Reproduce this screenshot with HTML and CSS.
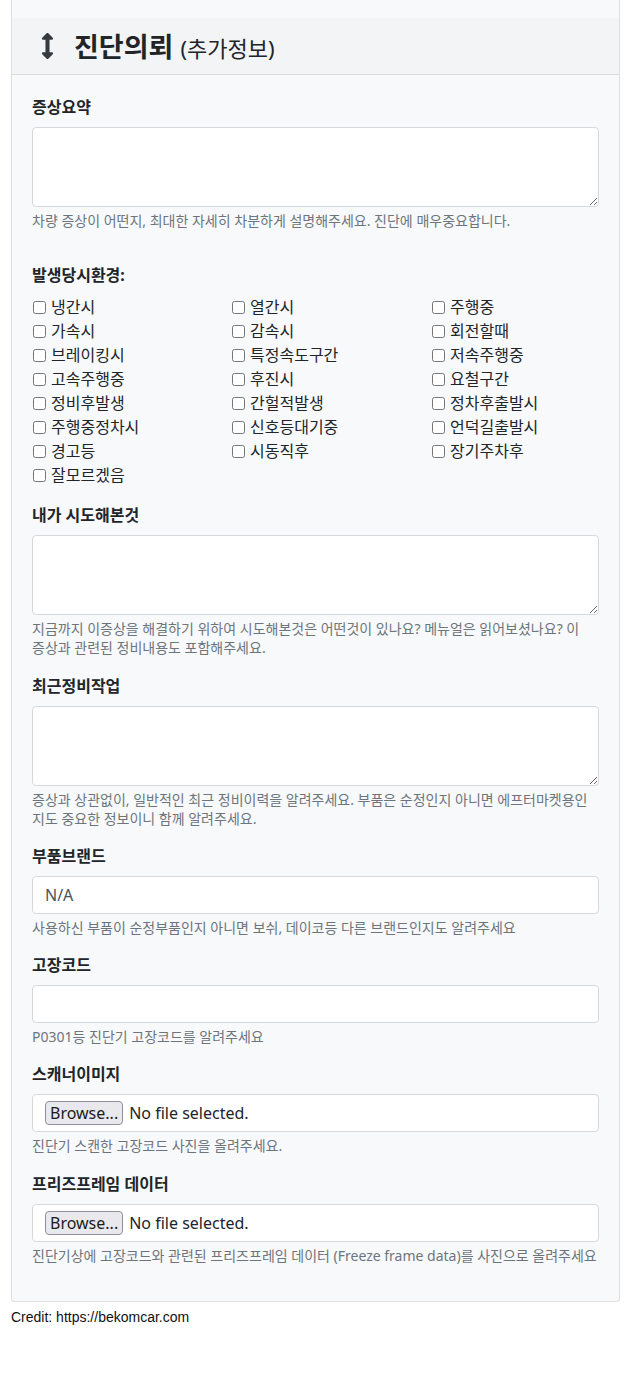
FILE: index.html
```
<!DOCTYPE html>
<html lang="ko">
<head>
<meta charset="UTF-8">
<meta name="viewport" content="width=device-width, initial-scale=1.0">
<title>진단의뢰</title>
<link rel="stylesheet" href="styles.css">
</head>
<body>
<div class="card">
    <div class="card-header">
        <h4 class="title">
            <svg class="icon" viewBox="0 0 256 512" aria-hidden="true"><path d="M214 378H168V134h46c21 0 32-26 17-41L145 7c-9-9-25-9-34 0L25 93c-15 15-4 41 17 41H88v244H42c-21 0-32 26-17 41l86 86c9 9 25 9 34 0l86-86c15-15 4-41-17-41z"/></svg>
            진단의뢰 <small>(추가정보)</small>
        </h4>
    </div>
    <div class="card-body">
        <div class="form-group">
            <label class="form-label">증상요약</label>
            <textarea class="form-control area"></textarea>
            <div class="help">차량 증상이 어떤지, 최대한 자세히 차분하게 설명해주세요. 진단에 매우중요합니다.</div>
        </div>

        <div class="form-group env">
            <label class="form-label">발생당시환경:</label>
            <div class="checks">
                <label class="check"><input type="checkbox"> 냉간시</label>
                <label class="check"><input type="checkbox"> 열간시</label>
                <label class="check"><input type="checkbox"> 주행중</label>
                <label class="check"><input type="checkbox"> 가속시</label>
                <label class="check"><input type="checkbox"> 감속시</label>
                <label class="check"><input type="checkbox"> 회전할때</label>
                <label class="check"><input type="checkbox"> 브레이킹시</label>
                <label class="check"><input type="checkbox"> 특정속도구간</label>
                <label class="check"><input type="checkbox"> 저속주행중</label>
                <label class="check"><input type="checkbox"> 고속주행중</label>
                <label class="check"><input type="checkbox"> 후진시</label>
                <label class="check"><input type="checkbox"> 요철구간</label>
                <label class="check"><input type="checkbox"> 정비후발생</label>
                <label class="check"><input type="checkbox"> 간헐적발생</label>
                <label class="check"><input type="checkbox"> 정차후출발시</label>
                <label class="check"><input type="checkbox"> 주행중정차시</label>
                <label class="check"><input type="checkbox"> 신호등대기중</label>
                <label class="check"><input type="checkbox"> 언덕길출발시</label>
                <label class="check"><input type="checkbox"> 경고등</label>
                <label class="check"><input type="checkbox"> 시동직후</label>
                <label class="check"><input type="checkbox"> 장기주차후</label>
                <label class="check"><input type="checkbox"> 잘모르겠음</label>
            </div>
        </div>

        <div class="form-group">
            <label class="form-label">내가 시도해본것</label>
            <textarea class="form-control area"></textarea>
            <div class="help keep">지금까지 이증상을 해결하기 위하여 시도해본것은 어떤것이 있나요? 메뉴얼은 읽어보셨나요? 이 증상과 관련된 정비내용도 포함해주세요.</div>
        </div>

        <div class="form-group">
            <label class="form-label">최근정비작업</label>
            <textarea class="form-control area"></textarea>
            <div class="help">증상과 상관없이, 일반적인 최근 정비이력을 알려주세요. 부품은 순정인지 아니면 에프터마켓용인지도 중요한 정보이니 함께 알려주세요.</div>
        </div>

        <div class="form-group">
            <label class="form-label">부품브랜드</label>
            <input type="text" class="form-control" value="N/A">
            <div class="help">사용하신 부품이 순정부품인지 아니면 보쉬, 데이코등 다른 브랜드인지도 알려주세요</div>
        </div>

        <div class="form-group">
            <label class="form-label">고장코드</label>
            <input type="text" class="form-control">
            <div class="help">P0301등 진단기 고장코드를 알려주세요</div>
        </div>

        <div class="form-group">
            <label class="form-label">스캐너이미지</label>
            <div class="form-control file">
                <button type="button" class="browse">Browse...</button>
                <span>No file selected.</span>
            </div>
            <div class="help">진단기 스캔한 고장코드 사진을 올려주세요.</div>
        </div>

        <div class="form-group">
            <label class="form-label">프리즈프레임 데이터</label>
            <div class="form-control file">
                <button type="button" class="browse">Browse...</button>
                <span>No file selected.</span>
            </div>
            <div class="help">진단기상에 고장코드와 관련된 프리즈프레임 데이터 (Freeze frame data)를 사진으로 올려주세요</div>
        </div>
    </div>
</div>
<footer>Credit: https://bekomcar.com</footer>
</body>
</html>
```

FILE: styles.css
```
body {
    margin: 0;
    padding: 0 11px;
    font-family: "Noto Sans", "Noto Sans CJK KR", sans-serif;
    color: #212529;
    background: #fff;
}
.card {
    background-color: #f8f9fa;
    border: 1px solid #dfdfdf;
    border-top: none;
    padding-top: 18px;
    border-radius: 0 0 4px 4px;
}
.card-header {
    background-color: #f3f4f5;
    border-bottom: 1px solid #dcdcdc;
    height: 57px;
    box-sizing: border-box;
    padding: 0 20px 0 29px;
    display: flex;
    align-items: center;
}
.title {
    margin: 0;
    display: flex;
    align-items: center;
    font-size: 27px;
    line-height: 1;
    font-weight: 700;
    color: #212529;
}
.title small {
    font-size: 22px;
    line-height: 1;
    font-weight: 400;
    margin-left: 7px;
    margin-top: 3px;
}
.icon {
    width: 13px;
    height: 26px;
    fill: #343a40;
    margin-right: 20px;
}
.card-body {
    padding: 20px;
}
.form-group {
    margin-bottom: 16px;
}
.form-label {
    display: block;
    font-size: 16px;
    line-height: 24px;
    font-weight: 700;
    margin-bottom: 8px;
}
.form-control {
    display: block;
    box-sizing: border-box;
    width: 100%;
    height: 38px;
    padding: 6px 12px;
    font-family: "Noto Sans", "Noto Sans CJK KR", sans-serif;
    font-size: 16px;
    line-height: 24px;
    color: #495057;
    background-color: #fff;
    border: 1px solid #d6d9dc;
    border-radius: 4px;
    margin: 0;
}
.area {
    height: 80px;
    resize: vertical;
}
.help {
    margin-top: 4px;
    font-size: 14px;
    line-height: 19.2px;
    color: #6c757d;
}
.help.keep {
    word-break: keep-all;
}
.env {
    margin-top: 33px;
}
.checks {
    display: grid;
    grid-template-columns: 199px 200px 1fr;
}
.check {
    display: flex;
    align-items: center;
    font-size: 16px;
    line-height: 24px;
    height: 24px;
    color: #212529;
}
.check input {
    width: 13px;
    height: 13px;
    margin: 0 5px 0 1px;
}
.file {
    display: flex;
    align-items: center;
    padding: 0 12px;
    color: #212529;
}
.browse {
    font-family: "Noto Sans", sans-serif;
    font-size: 16px;
    height: 24px;
    line-height: 20px;
    padding: 0 4px;
    margin-right: 6px;
    color: #1b1b1b;
    background-color: #e9e9ed;
    border: 1px solid #8f8f9d;
    border-radius: 4px;
}
footer {
    font-family: "Liberation Sans", Arial, sans-serif;
    font-size: 14px;
    line-height: 20px;
    margin-top: 5px;
    color: #111;
}
```
